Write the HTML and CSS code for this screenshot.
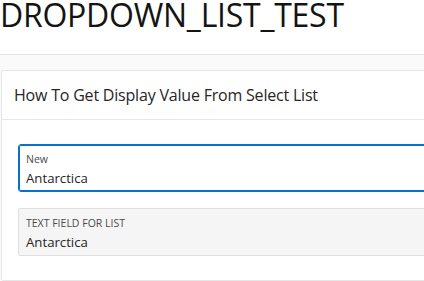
FILE: index.html
```html
<!DOCTYPE html>
<html>
<head>
<meta charset="utf-8">
<link rel="stylesheet" href="styles.css">
</head>
<body>
<div class="page">
  <header class="titlebar">
    <h1 class="title">DROPDOWN_LIST_TEST</h1>
  </header>
  <main class="content">
    <section class="card">
      <div class="card-head">How To Get Display Value From Select List</div>
      <div class="card-body">
        <div class="field field-focus">
          <div class="field-label">New</div>
          <div class="field-value">Antarctica</div>
        </div>
        <div class="field field-readonly">
          <div class="field-label">TEXT FIELD FOR LIST</div>
          <div class="field-value">Antarctica</div>
        </div>
      </div>
    </section>
  </main>
</div>
</body>
</html>
```

FILE: styles.css
```css
html, body {
  margin: 0;
  padding: 0;
  background: #ffffff;
}
.page {
  width: 424px;
  height: 281px;
  overflow: hidden;
  font-family: "Open Sans", "Noto Sans", sans-serif;
  color: #262626;
}
.titlebar {
  height: 54px;
  border-bottom: 1px solid #e4e4e4;
  background: #ffffff;
}
.title {
  margin: 0;
  padding: 0;
  font-size: 32px;
  line-height: 30px;
  font-weight: 400;
  letter-spacing: -0.25px;
  color: #141414;
  white-space: nowrap;
}
.content {
  background: #fafafa;
  padding: 15px 0 0 1px;
}
.card {
  width: 470px;
  background: #ffffff;
  border: 1px solid #e6e6e6;
  border-radius: 2px;
}
.card-head {
  padding: 12px 12px;
  font-size: 16px;
  line-height: 24px;
  letter-spacing: -0.2px;
  color: #262626;
  border-bottom: 1px solid #e6e6e6;
  white-space: nowrap;
}
.card-body {
  padding: 24px 16px 24px 16px;
  display: flex;
  flex-direction: column;
  gap: 16px;
}
.field {
  height: 48px;
  box-sizing: border-box;
  padding: 8px 7px 3px 7px;
  border-radius: 3px;
  border: 1px solid #dedede;
}
.field-focus {
  border-color: #0572ce;
  box-shadow: inset 0 0 0 1px #0572ce;
  background: #ffffff;
}
.field-readonly {
  background: #f5f5f5;
  border-color: #e0e0e0;
  border-radius: 2px;
}
.field-label {
  font-size: 10.5px;
  line-height: 13px;
  color: #4a4a4a;
  white-space: nowrap;
}
.field-value {
  margin-top: 2px;
  font-size: 13.2px;
  line-height: 20px;
  color: #262626;
  white-space: nowrap;
}
```
